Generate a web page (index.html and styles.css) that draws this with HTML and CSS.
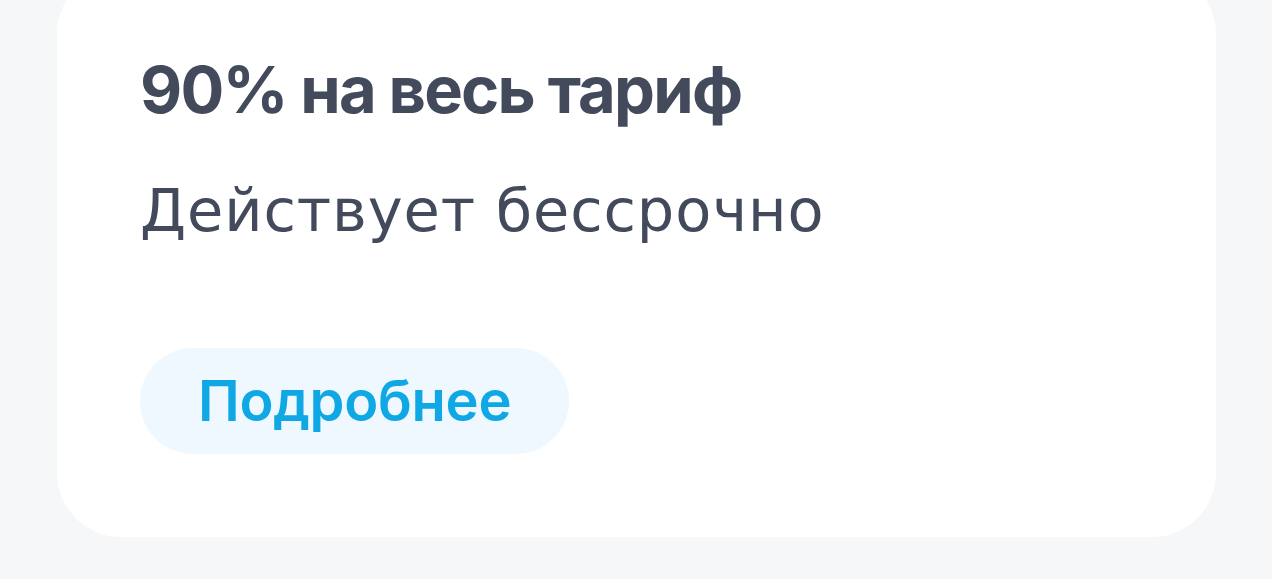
FILE: index.html
```html
<!DOCTYPE html>
<html lang="ru">
<head>
<meta charset="utf-8">
<title>Тариф</title>
<link rel="stylesheet" href="styles.css">
</head>
<body>
<div class="page">
  <section class="card">
    <h2 class="title">90% на весь тариф</h2>
    <p class="subtitle">Действует бессрочно</p>
    <a class="more" href="#">Подробнее</a>
  </section>
</div>
</body>
</html>
```
FILE: styles.css
```css
html, body {
  margin: 0;
  padding: 0;
  background: #f6f7f9;
  overflow: hidden;
}
body {
  font-family: Inter, "Noto Sans", sans-serif;
  color: #424a5c;
}
.page {
  width: 1272px;
  height: 579px;
  padding-left: 57px;
  box-sizing: border-box;
}
.card {
  width: 1159px;
  height: 567px;
  margin-top: -30px;
  box-sizing: border-box;
  padding: 80px 0 0 83px;
  background: #ffffff;
  border-radius: 64px;
  display: flex;
  flex-direction: column;
  align-items: flex-start;
}
.title {
  margin: 0;
  font-size: 65px;
  line-height: 80px;
  font-weight: 700;
  letter-spacing: -1.8px;
}
.subtitle {
  margin: 45px 0 0;
  font-family: "DejaVu Sans", Inter, sans-serif;
  font-size: 59px;
  line-height: 71px;
  font-weight: 400;
  letter-spacing: 0.9px;
}
.more {
  margin-top: 102px;
  height: 106px;
  padding: 0 58px;
  border-radius: 53px;
  background: #eef8fe;
  color: #10a8e4;
  font-size: 56px;
  font-weight: 600;
  letter-spacing: -0.3px;
  text-decoration: none;
  display: flex;
  align-items: center;
}
```
